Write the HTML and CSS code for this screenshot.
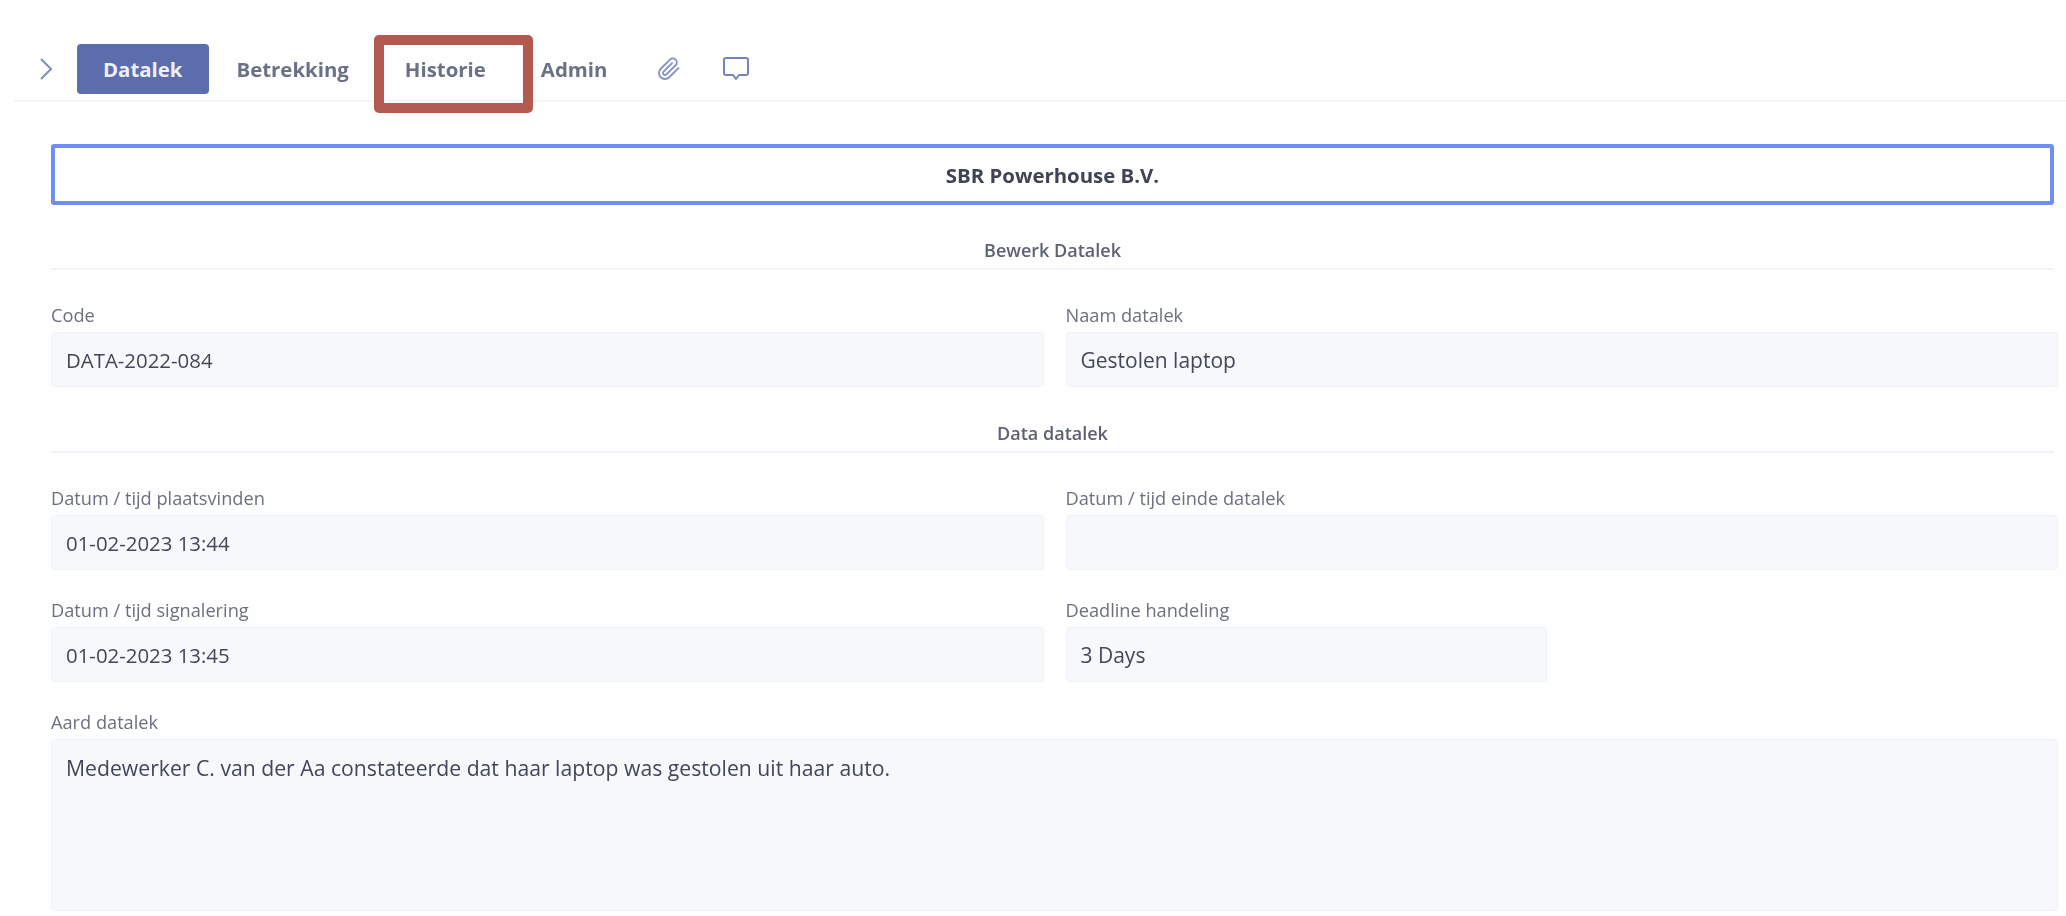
FILE: index.html
```html
<!DOCTYPE html>
<html lang="nl">
<head>
	<meta charset="UTF-8">
	<title>Datalek</title>
	<link rel="stylesheet" href="styles.css">
</head>
<body>

	<div class="tabs">
		<button type="button" class="tab-toggle">
			<svg width="14" height="24" viewBox="0 0 14 24"><path d="M2 2l10 10L2 22" fill="none" stroke="#7f8cbc" stroke-width="2"/></svg>
		</button>
		<a href="#" class="tab tab-active">Datalek</a>
		<a href="#" class="tab">Betrekking</a>
		<a href="#" class="tab tab-marked">Historie</a>
		<a href="#" class="tab">Admin</a>
		<a href="#" class="tab-icon">
			<svg width="24" height="24" viewBox="0 0 24 24"><path d="M21.440 11.050l-9.190 9.190a6 6 0 0 1-8.490-8.490l9.190-9.190a4 4 0 0 1 5.660 5.660l-9.200 9.190a2 2 0 0 1-2.830-2.830l8.490-8.480" fill="none" stroke="#8593c6" stroke-width="1.900" stroke-linecap="round" stroke-linejoin="round"/></svg>
		</a>
		<a href="#" class="tab-icon">
			<svg width="28" height="26" viewBox="0 0 28 26"><path d="M4 2h20a2 2 0 0 1 2 2v13a2 2 0 0 1-2 2h-7l-3 4-3-4H4a2 2 0 0 1-2-2V4a2 2 0 0 1 2-2z" fill="none" stroke="#7484bb" stroke-width="2" stroke-linejoin="round"/></svg>
		</a>
	</div>

	<div class="content">
		<div class="title-box">SBR Powerhouse B.V.</div>

		<div class="section-head section-first">Bewerk Datalek</div>
		<div class="form-row">
			<div class="field">
				<label>Code</label>
				<div class="value">DATA-2022-084</div>
			</div>
			<div class="field">
				<label>Naam datalek</label>
				<div class="value value-large">Gestolen laptop</div>
			</div>
		</div>

		<div class="section-head">Data datalek</div>
		<div class="form-row">
			<div class="field">
				<label>Datum / tijd plaatsvinden</label>
				<div class="value">01-02-2023 13:44</div>
			</div>
			<div class="field">
				<label>Datum / tijd einde datalek</label>
				<div class="value"></div>
			</div>
		</div>
		<div class="form-row">
			<div class="field">
				<label>Datum / tijd signalering</label>
				<div class="value">01-02-2023 13:45</div>
			</div>
			<div class="half-row">
				<div class="field">
					<label>Deadline handeling</label>
					<div class="value value-large">3 Days</div>
				</div>
			</div>
		</div>
		<div class="form-row form-row-single">
			<div class="field">
				<label>Aard datalek</label>
				<div class="value value-area">Medewerker C. van der Aa constateerde dat haar laptop was gestolen uit haar auto.</div>
			</div>
		</div>
	</div>

</body>
</html>
```

FILE: styles.css
```css
html, body{ height: 100%; }
body{
	margin: 0;
	overflow: hidden;
	background: #fefefe;
	font-family: "Open Sans", "Noto Sans", sans-serif;
	font-size: 20.4px;
	color: #41475a;
	filter: blur(.7px);
}
a{ text-decoration: none; color: inherit; }
button{ background: none; border: 0; padding: 0; font: inherit; }

/* tabs */
.tabs{
	display: flex;
	align-items: center;
	height: 50px;
	margin-left: 14px;
	padding: 44px 0 6px 25px;
	border-bottom: 2px solid #f2f4f9;
}
.tab-toggle{ display: flex; width: 38px; }
.tab{
	position: relative;
	display: flex;
	align-items: center;
	height: 50px;
	padding: 0 28px;
	font-size: 20.4px;
	font-weight: 700;
	color: #6a7086;
}
.tab-active{
	padding: 0 26px;
	background: #5b6dad;
	border-radius: 4px;
	color: #eef0f8;
}
.tab-marked{ padding-right: 27px; }
.tab-marked:after{
	content: '';
	position: absolute;
	left: -3px;
	right: -20px;
	top: -9px;
	bottom: -19px;
	border: 10px solid #b25950;
	border-radius: 5px;
}
.tab-icon{ display: flex; margin: 0 19px 0 22px; }

/* form */
.content{ padding: 42px 12px 0 51px; }
.title-box{
	display: flex;
	align-items: center;
	justify-content: center;
	height: 61px;
	box-sizing: border-box;
	border: 4px solid #6f8df3;
	border-radius: 3px;
	font-size: 20.4px;
	font-weight: 700;
	color: #3e4454;
}
.section-head{
	margin: 36px 0 35px;
	padding-bottom: 8px;
	border-bottom: 2px solid #f2f4f9;
	line-height: 20px;
	font-size: 18px;
	font-weight: 600;
	text-align: center;
	color: #5c6274;
}
.section-first{ margin-top: 35px; }
.form-row{
	display: grid;
	grid-template-columns: 1fr 1fr;
	column-gap: 22px;
	margin: 0 -4px 30px 0;
}
.form-row-single{ grid-template-columns: 1fr; }
.half-row{
	display: grid;
	grid-template-columns: 1fr 1fr;
	column-gap: 30px;
}
.field label{
	display: block;
	margin-bottom: 7px;
	line-height: 20px;
	font-size: 18.2px;
	color: #6b7080;
}
.value{
	display: flex;
	align-items: center;
	box-sizing: border-box;
	height: 55px;
	padding: 1px 14px 0;
	background: #f7f8fc;
	border: 1px solid #f0f2f8;
	border-radius: 4px;
}
.value-large{ font-size: 21px; }
.value-area{
	align-items: flex-start;
	height: 172px;
	padding-top: 13px;
	font-size: 21.2px;
}
```
